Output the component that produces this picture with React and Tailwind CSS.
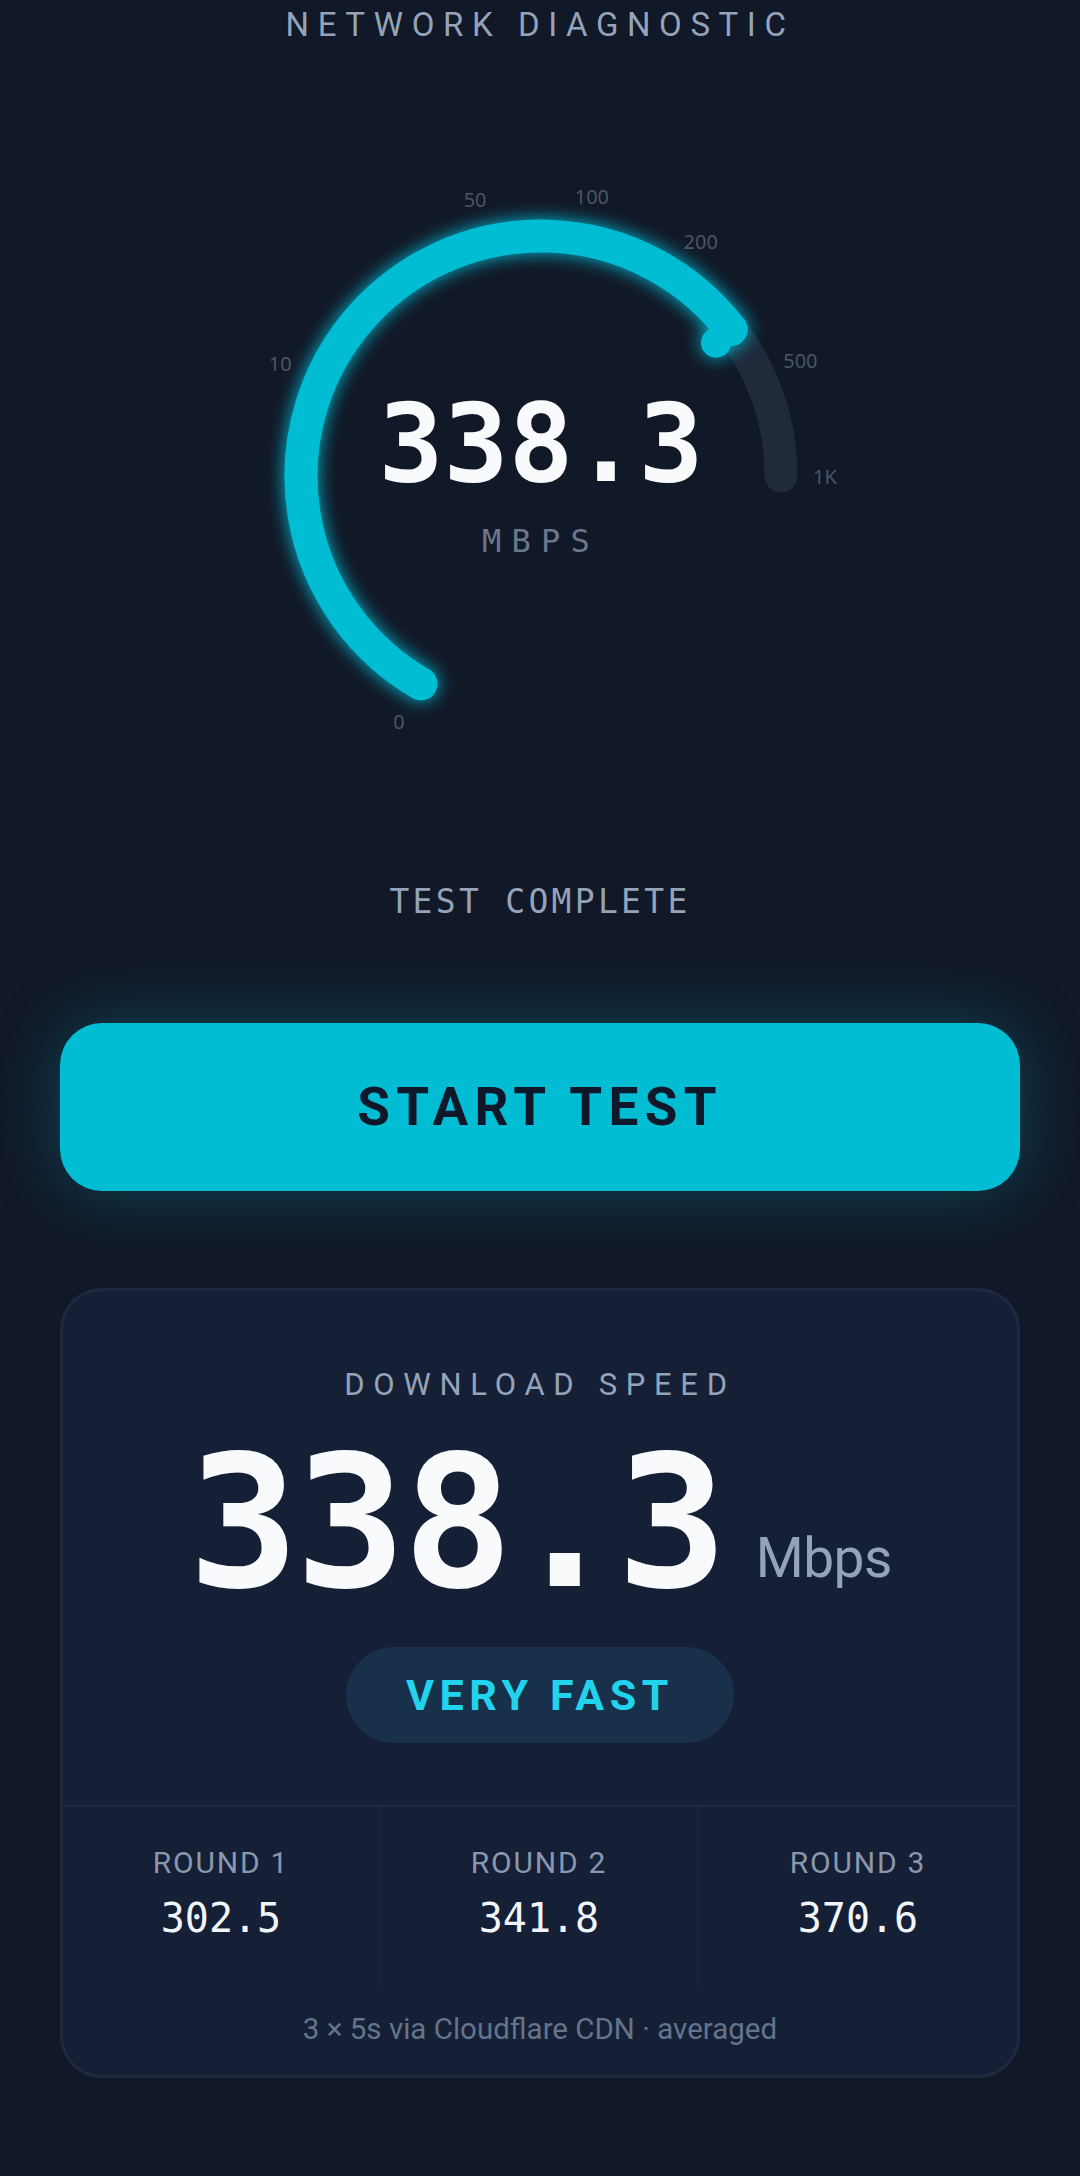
const CX = 320;
const CY = 320;
const R = 240;
const START = 120;
const SWEEP = 240;

const speed = 338.3;
const rounds = [
  { label: "ROUND 1", value: "302.5" },
  { label: "ROUND 2", value: "341.8" },
  { label: "ROUND 3", value: "370.6" },
];
const ticks = [
  [0, "0"],
  [10, "10"],
  [50, "50"],
  [100, "100"],
  [200, "200"],
  [500, "500"],
  [1000, "1K"],
];

function polar(angle, radius) {
  const rad = (angle * Math.PI) / 180;
  return [CX + radius * Math.cos(rad), CY + radius * Math.sin(rad)];
}

function arc(a0, a1) {
  const [x0, y0] = polar(a0, R);
  const [x1, y1] = polar(a1, R);
  return `M ${x0} ${y0} A ${R} ${R} 0 ${a1 - a0 > 180 ? 1 : 0} 1 ${x1} ${y1}`;
}

// log scale, 0 .. 1000 Mbps
const angleFor = (v) => START + (SWEEP * Math.log10(1 + v)) / Math.log10(1001);

function Gauge() {
  const end = angleFor(speed);
  const [kx, ky] = polar(end + 0.3, 220);

  return (
    <svg width="640" height="640" viewBox="0 0 640 640" className="block overflow-visible">
      <defs>
        <filter id="glow" x="-20%" y="-20%" width="140%" height="140%">
          <feGaussianBlur stdDeviation="9" result="b" />
          <feMerge>
            <feMergeNode in="b" />
            <feMergeNode in="SourceGraphic" />
          </feMerge>
        </filter>
      </defs>

      {/* track */}
      <path d={arc(START, START + SWEEP)} stroke="#1f2a3b" strokeWidth="33" fill="none" strokeLinecap="round" />

      {/* progress */}
      <g filter="url(#glow)">
        <path d={arc(START, end)} stroke="#00bdd4" strokeWidth="33" fill="none" strokeLinecap="round" />
        <circle cx={kx} cy={ky} r="15" fill="#00bdd4" />
      </g>

      {ticks.map(([v, label]) => {
        const [x, y] = polar(angleFor(v), 284);
        return (
          <text
            key={label}
            x={x}
            y={y}
            textAnchor="middle"
            dominantBaseline="central"
            fontSize="20"
            fill="#4b5565"
            className="font-['Noto_Sans',sans-serif]"
          >
            {label}
          </text>
        );
      })}

      <text
        x={CX}
        y="325"
        textAnchor="middle"
        fontSize="108"
        fill="#f8fafc"
        className="font-['DejaVu_Sans_Mono',monospace] font-semibold"
      >
        338.3
      </text>
      <text
        x={CX}
        y="396"
        textAnchor="middle"
        fontSize="32"
        fill="#6b778c"
        letterSpacing="0.32em"
        className="font-['DejaVu_Sans_Mono',monospace]"
      >
        MBPS
      </text>
    </svg>
  );
}

export default function App() {
  return (
    <div className="min-h-[2176px] w-full bg-[#111827] flex flex-col items-center font-['Roboto',sans-serif]">
      <h1 className="pt-[8px] text-[33px] leading-none font-normal tracking-[0.26em] text-[#94a3b8]">
        NETWORK DIAGNOSTIC
      </h1>

      <div className="mt-[115px] pl-[2px]">
        <Gauge />
      </div>

      <p className="mt-[89px] text-[33px] leading-none tracking-widest text-[#94a3b8] font-['DejaVu_Sans_Mono',monospace]">
        TEST COMPLETE
      </p>

      <button className="mt-[105px] w-[960px] h-[168px] rounded-[42px] bg-[#00bdd4] shadow-[0_0_70px_rgba(0,189,212,0.28)] flex items-center justify-center">
        <span className="text-[53px] leading-none font-bold tracking-[0.12em] text-[#0f172a]">START TEST</span>
      </button>

      <div className="mt-[97px] w-[960px] rounded-[42px] border-[3px] border-[#1e293f] bg-[#151f36] overflow-hidden">
        <div className="pt-[78px] pb-[62px] flex flex-col items-center">
          <p className="text-[31px] leading-none tracking-[0.28em] text-[#94a3b8]">DOWNLOAD SPEED</p>

          <div className="mt-[30px] flex items-end gap-[32px]">
            <span className="text-[184px] leading-none font-bold tracking-[-0.02em] text-[#f8fafc] font-['DejaVu_Sans_Mono',monospace]">
              338.3
            </span>
            <span className="mb-[28px] text-[55px] leading-none tracking-[-0.01em] text-[#94a3b8]">Mbps</span>
          </div>

          <div className="mt-[33px] w-[388px] h-[96px] rounded-full bg-[#18304a] flex items-center justify-center">
            <span className="text-[43px] leading-none font-bold tracking-[0.13em] text-[#22d3ee]">VERY FAST</span>
          </div>
        </div>

        <div className="grid grid-cols-3 border-t-2 border-[#1e293f] divide-x-2 divide-[#1b2539]">
          {rounds.map((r) => (
            <div key={r.label} className="pt-[41px] pb-[49px] flex flex-col items-center">
              <span className="text-[30px] leading-none tracking-[0.06em] text-[#8a97ad]">{r.label}</span>
              <span className="mt-[20px] text-[40px] leading-none text-[#f1f5f9] font-['DejaVu_Sans_Mono',monospace]">
                {r.value}
              </span>
            </div>
          ))}
        </div>

        <p className="pt-[28px] pb-[30px] text-center text-[29.5px] leading-none text-[#64748b]">
          3 × 5s via Cloudflare CDN · averaged
        </p>
      </div>
    </div>
  );
}
